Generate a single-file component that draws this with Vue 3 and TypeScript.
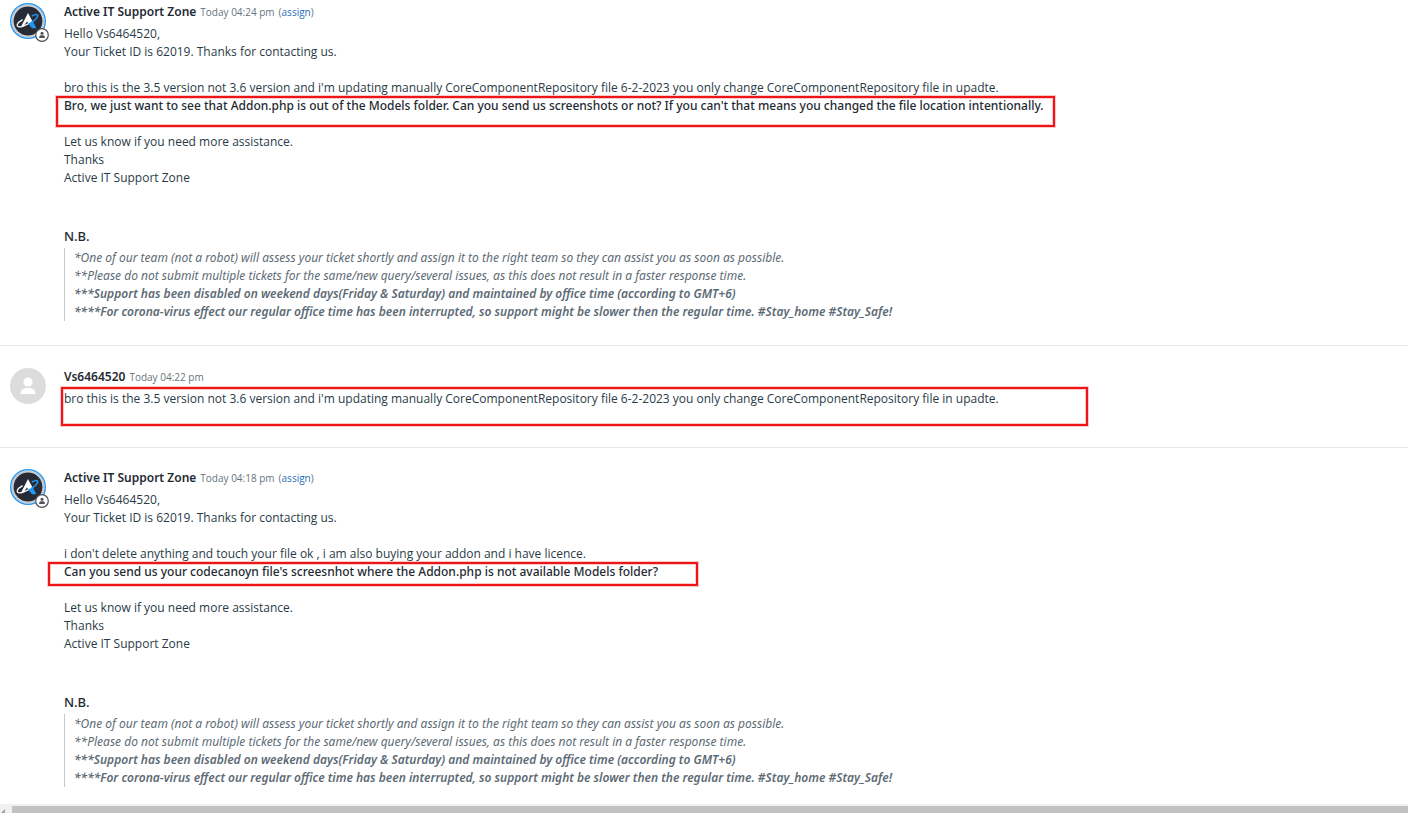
<script setup lang="ts">
interface Message {
  id: number
  author: string
  time: string
  agent: boolean
  greeting?: string[]
  quoted: string
  reply?: string
  mark: string
}

const closing: string[] = ['Let us know if you need more assistance.', 'Thanks', 'Active IT Support Zone']
const greeting: string[] = ['Hello Vs6464520,', 'Your Ticket ID is 62019. Thanks for contacting us.']
const customerText =
  "bro this is the 3.5 version not 3.6 version and i'm updating manually CoreComponentRepository file 6-2-2023 you only change CoreComponentRepository file in upadte."

const messages: Message[] = [
  {
    id: 1,
    author: 'Active IT Support Zone',
    time: 'Today 04:24 pm',
    agent: true,
    greeting,
    quoted: customerText,
    reply:
      "Bro, we just want to see that Addon.php is out of the Models folder. Can you send us screenshots or not? If you can't that means you changed the file location intentionally.",
    mark: 'mark-reply',
  },
  {
    id: 2,
    author: 'Vs6464520',
    time: 'Today 04:22 pm',
    agent: false,
    quoted: customerText,
    mark: 'mark-customer',
  },
  {
    id: 3,
    author: 'Active IT Support Zone',
    time: 'Today 04:18 pm',
    agent: true,
    greeting,
    quoted: "i don't delete anything and touch your file ok , i am also buying your addon and i have licence.",
    reply: "Can you send us your codecanoyn file's screesnhot where the Addon.php is not available Models folder?",
    mark: 'mark-question',
  },
]
</script>

<template>
  <div class="page">
    <main class="thread">
      <article v-for="m in messages" :key="m.id" class="message">
        <div class="avatar">
          <template v-if="m.agent">
            <svg class="face" viewBox="0 0 36 36" role="img" aria-label="Active IT logo">
              <circle cx="18" cy="18" r="18" fill="#2196f3" />
              <circle cx="18" cy="18" r="16.7" fill="#d3d8dd" />
              <circle cx="18" cy="18" r="15.6" fill="none" stroke="#a3abb2" stroke-width="1" stroke-dasharray="1 1.6" />
              <circle cx="18" cy="18" r="14.4" fill="#272b35" />
              <path d="M10.6 24.4 L18 10 L22.4 18.2 L18.6 20.8 L17 18.6 L13.4 23.6 Z" fill="#fff" />
              <path d="M22.4 17.6 L26.4 25.2 L22 25.2 L18.8 21.2 Z" fill="#2196f3" />
              <path d="M12.6 16.6 C6.6 20 6 23.4 9 23.8 C12 24.2 17 21.6 21 19" fill="none" stroke="#fff" stroke-width="1.3" />
              <path d="M18 21.4 C24 18.4 28.6 14.2 27.6 12.2 C27 11 24.4 11.6 21.8 13" fill="none" stroke="#2196f3" stroke-width="1.5" />
            </svg>
            <svg class="badge" viewBox="0 0 14 14" aria-hidden="true">
              <circle cx="7" cy="7" r="6.3" fill="#fff" stroke="#4d5156" stroke-width="1.2" />
              <circle cx="7" cy="5.2" r="1.5" fill="#4d5156" />
              <path d="M4.2 9.9 V8.9 C4.2 7.6 5.4 7.2 7 7.2 S9.8 7.6 9.8 8.9 V9.9 Z" fill="#4d5156" />
            </svg>
          </template>
          <svg v-else class="face" viewBox="0 0 36 36" role="img" aria-label="Customer">
            <circle cx="18" cy="18" r="18" fill="#dcdcdc" />
            <circle cx="18" cy="14" r="4.6" fill="#fff" />
            <path d="M10.6 26 C10.6 21.8 13.4 20 18 20 S25.4 21.8 25.4 26 Z" fill="#fff" />
          </svg>
        </div>
        <div class="content">
          <header class="head">
            <strong class="author">{{ m.author }}</strong>
            <span class="time">{{ m.time }}</span>
            <a v-if="m.agent" class="assign" href="#">(<span>assign</span>)</a>
          </header>
          <div class="body">
            <template v-if="m.greeting">
              <p v-for="line in m.greeting" :key="line">{{ line }}</p>
              <br />
            </template>
            <p class="anchor">
              {{ m.quoted }}
              <i v-if="!m.reply" class="mark" :class="m.mark"></i>
            </p>
            <template v-if="m.reply">
              <p class="anchor reply">
                {{ m.reply }}
                <i class="mark" :class="m.mark"></i>
              </p>
              <br />
              <p v-for="line in closing" :key="line">{{ line }}</p>
            </template>
          </div>
          <section v-if="m.agent" class="notes">
            <h4>N.B.</h4>
            <blockquote>
              <p>*One of our team (not a robot) will assess your ticket shortly and assign it to the right team so they can assist you as soon as possible.</p>
              <p>**Please do not submit multiple tickets for the same/new query/several issues, as this does not result in a faster response time.</p>
              <p class="strong">***Support has been disabled on weekend days(Friday &amp; Saturday) and maintained by office time (according to GMT+6)</p>
              <p class="strong">****For corona-virus effect our regular office time has been interrupted, so support might be slower then the regular time. #Stay_home #Stay_Safe!</p>
            </blockquote>
          </section>
        </div>
      </article>
    </main>
    <div class="scrollbar" aria-hidden="true">
      <svg class="arrow" viewBox="0 0 12 9"><path d="M5 5 V9 H1 Z" fill="#a3a3a3" /></svg>
      <div class="thumb"></div>
    </div>
  </div>
</template>

<style>
body {
  margin: 0;
  background: #fff;
}
</style>

<style scoped>
.page {
  display: flex;
  flex-direction: column;
  min-height: 100vh;
  overflow: hidden;
  color: #2a3b47;
  font: 12px/18px "Segoe UI", "Open Sans", "Noto Sans", sans-serif;
}
.thread {
  flex: 1;
}
.message {
  display: flex;
  gap: 18px;
  padding: 22px 10px 24px;
  border-bottom: 1px solid #e8e8e8;
}
.message:first-child {
  padding-top: 3px;
}
.message:nth-child(2) {
  padding-bottom: 39px;
}
.message:last-child {
  border-bottom: 0;
  padding-top: 21px;
  padding-bottom: 17px;
}
.avatar {
  position: relative;
  flex: none;
  width: 36px;
  height: 36px;
}
.face {
  display: block;
  width: 36px;
  height: 36px;
}
.badge {
  position: absolute;
  right: -3px;
  bottom: -3px;
  width: 14px;
  height: 14px;
}
.content {
  flex: 1;
  min-width: 0;
}
.head {
  display: flex;
  align-items: baseline;
  gap: 4px;
  height: 18px;
  margin-bottom: 4px;
}
.author {
  color: #1f2b33;
  font-family: "Segoe UI", "Noto Sans", sans-serif;
  font-weight: 600;
}
.time,
.assign {
  color: #66747e;
  font-size: 10px;
}
.assign {
  text-decoration: none;
}
.assign span {
  color: #1f6fb5;
}
p,
h4,
blockquote {
  margin: 0;
}
.body p {
  white-space: nowrap;
}
.anchor {
  position: relative;
}
.reply {
  color: #1f2b33;
  font-family: "Segoe UI", "Noto Sans", sans-serif;
  font-weight: 500;
}
.mark {
  position: absolute;
  box-sizing: border-box;
  border: 2px solid #ed1515;
  box-shadow: 0 0 0 1px #fbc9c9, inset 0 0 0 1px #fbc9c9;
}
.mark-reply {
  top: -1px;
  left: -8px;
  width: 999px;
  height: 31px;
}
.mark-customer {
  top: -3px;
  left: -3px;
  width: 1027px;
  height: 39px;
}
.mark-question {
  top: -1px;
  left: -16px;
  width: 650px;
  height: 24px;
}
.notes {
  margin-top: 40px;
}
.notes h4 {
  margin-bottom: 3px;
  color: #1f2b33;
  font: 500 13px/18px "Segoe UI", "Noto Sans", sans-serif;
}
blockquote {
  padding: 1px 0 0 9px;
  border-left: 1px solid #c3c9cd;
  color: #5d6b75;
  font-family: "Segoe UI", "Noto Sans", sans-serif;
  font-style: italic;
}
blockquote p {
  white-space: nowrap;
}
.strong {
  font-weight: 600;
}
.scrollbar {
  display: flex;
  height: 9px;
  background: #f0f0f0;
}
.arrow {
  flex: none;
  width: 12px;
  height: 9px;
}
.thumb {
  flex: 1;
  margin-top: 2px;
  background: #c1c1c1;
}
</style>
